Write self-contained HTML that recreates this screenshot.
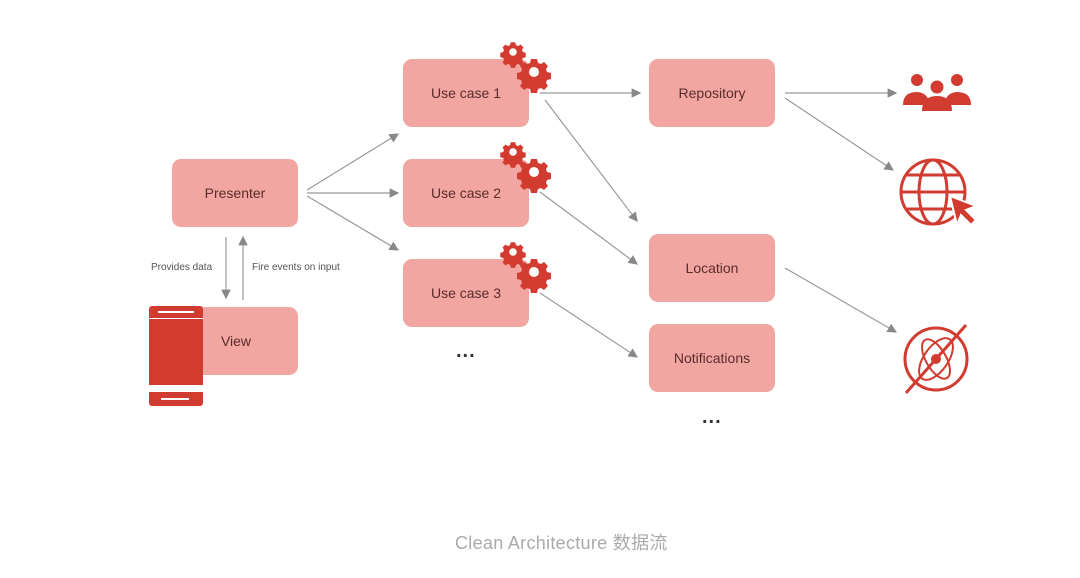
<!DOCTYPE html><html><head><meta charset="utf-8"><style>
body{margin:0;width:1080px;height:578px;background:#fff;overflow:hidden;position:relative;font-family:"Liberation Sans","Noto Sans CJK SC",sans-serif}
.b{position:absolute;width:126px;height:68px;background:#f2a6a1;border-radius:9px;color:#5a2b2b;font-size:14px;display:flex;align-items:center;justify-content:center}
.t{position:absolute;font-size:10px;color:#555}
.d{position:absolute;font-size:20px;font-weight:bold;color:#333;letter-spacing:1px}
</style></head><body>
<svg width="1080" height="578" style="position:absolute;left:0;top:0">
<defs><marker id="a" markerWidth="8" markerHeight="8" refX="7" refY="4" orient="auto"><path d="M0,0L8,4L0,8z" fill="#888"/></marker>
<g id="g"><path fill="#d23b30" d="M-3,-10h6l1,4 3,1 3,-2 4,4 -2,3 1,3 4,1v6l-4,1 -1,3 2,3 -4,4 -3,-2 -3,1 -1,4h-6l-1,-4 -3,-1 -3,2 -4,-4 2,-3 -1,-3 -4,-1v-6l4,-1 1,-3 -2,-3 4,-4 3,2 3,-1z" transform="translate(0,-3)"/><circle cx="0" cy="0" r="5" fill="#fff"/></g></defs>
<g stroke="#999" stroke-width="1.2" fill="none" marker-end="url(#a)">
<line x1="307" y1="190" x2="398" y2="134"/><line x1="307" y1="193" x2="398" y2="193"/><line x1="307" y1="196" x2="398" y2="250"/>
<line x1="540" y1="93" x2="640" y2="93"/><line x1="545" y1="100" x2="637" y2="221"/>
<line x1="540" y1="192" x2="637" y2="264"/><line x1="540" y1="293" x2="637" y2="357"/>
<line x1="785" y1="93" x2="896" y2="93"/><line x1="785" y1="98" x2="893" y2="170"/><line x1="785" y1="268" x2="896" y2="332"/>
<line x1="226" y1="237" x2="226" y2="298"/><line x1="243" y1="300" x2="243" y2="237"/>
</g>
</svg>
<div class="b" style="left:172px;top:159px">Presenter</div>
<div class="b" style="left:403px;top:59px">Use case 1</div>
<div class="b" style="left:403px;top:159px">Use case 2</div>
<div class="b" style="left:403px;top:259px">Use case 3</div>
<div class="b" style="left:649px;top:59px">Repository</div>
<div class="b" style="left:649px;top:234px">Location</div>
<div class="b" style="left:649px;top:324px">Notifications</div>
<div class="b" style="left:190px;top:307px;width:108px"><span style="margin-left:-16px">View</span></div>
<div style="position:absolute;left:149px;top:306px;width:54px;height:100px;background:#d23b30;border-radius:3px"></div>
<div style="position:absolute;left:149px;top:318px;width:54px;height:1px;background:#fff"></div>
<div style="position:absolute;left:149px;top:385px;width:54px;height:7px;background:#fff"></div>
<div style="position:absolute;left:161px;top:398px;width:28px;height:2px;background:#fff"></div>
<div style="position:absolute;left:158px;top:311px;width:36px;height:2px;background:#fff"></div>
<div class="t" style="left:151px;top:262px">Provides data</div>
<div class="t" style="left:252px;top:262px">Fire events on input</div>
<svg width="1080" height="578" style="position:absolute;left:0;top:0">
<use href="#g" transform="translate(513,52) scale(.75)"/><use href="#g" transform="translate(534,72)"/>
<use href="#g" transform="translate(513,152) scale(.75)"/><use href="#g" transform="translate(534,172)"/>
<use href="#g" transform="translate(513,252) scale(.75)"/><use href="#g" transform="translate(534,272)"/>
<g fill="#d23b30"><circle cx="917" cy="80" r="6"/><circle cx="957" cy="80" r="6"/><circle cx="937" cy="87" r="6.5"/>
<path d="M903,105q0,-13 14,-13 10,0 14,13z"/><path d="M943,105q4,-13 14,-13 14,0 14,13z"/><path d="M922,111q0,-15 15,-15 15,0 15,15z"/></g>
<g fill="none" stroke="#d23b30" stroke-width="3"><circle cx="933" cy="192" r="32"/><ellipse cx="933" cy="192" rx="14" ry="32"/><line x1="901" y1="192" x2="965" y2="192"/><path d="M907,175h52M907,209h52"/>
<circle cx="936" cy="359" r="31"/><ellipse cx="936" cy="359" rx="12" ry="24" transform="rotate(35 936 359)" stroke-width="2"/><ellipse cx="936" cy="359" rx="10" ry="22" transform="rotate(-30 936 359)" stroke-width="2"/><line x1="906" y1="393" x2="966" y2="325"/></g>
<circle cx="936" cy="359" r="5" fill="#d23b30"/>
<path d="M950,196l26,10-10,4 10,10-5,5-10,-10-4,10z" fill="#d23b30" stroke="#fff" stroke-width="2"/>
</svg>
<div class="d" style="left:456px;top:340px">...</div>
<div class="d" style="left:702px;top:406px">...</div>
<div style="position:absolute;left:455px;top:529px;font-size:18px;color:#aaa;letter-spacing:0.3px">Clean Architecture 数据流</div>
</body></html>
